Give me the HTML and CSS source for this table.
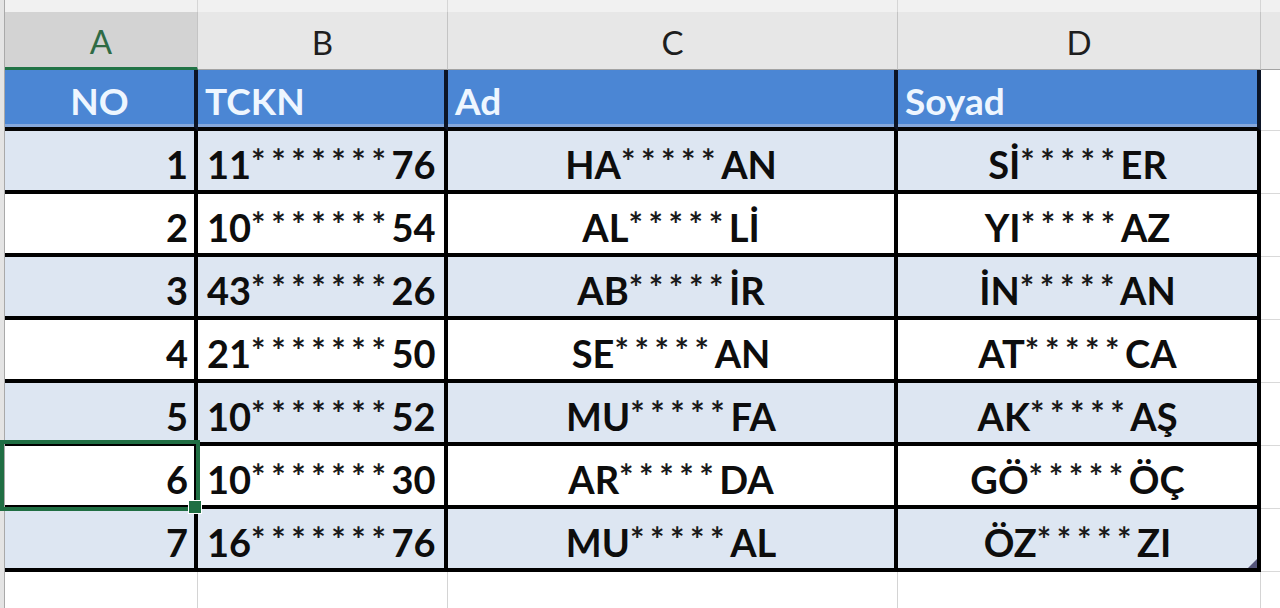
FILE: index.html
```html
<!DOCTYPE html>
<html lang="tr">
<head>
<meta charset="utf-8">
<title>Excel</title>
<link rel="stylesheet" href="styles.css">
</head>
<body>
<div class="sheet">
  <div class="row top-strip">
    <div class="stub"></div><div class="tc"></div><div class="tc"></div><div class="tc"></div><div class="tc"></div><div class="tc last"></div>
  </div>
  <div class="row col-head">
    <div class="stub"></div>
    <div class="ch sel">A</div>
    <div class="ch">B</div>
    <div class="ch">C</div>
    <div class="ch">D</div>
    <div class="ch last"></div>
  </div>
  <div class="row head-row">
    <div class="stub"></div>
    <div class="hc center">NO</div>
    <div class="hc left">TCKN</div>
    <div class="hc left">Ad</div>
    <div class="hc left">Soyad</div>
    <div class="ec"></div>
  </div>

  <div class="row data odd">
    <div class="stub"></div>
    <div class="dc num">1</div>
    <div class="dc left">11<span class="stars">*******</span>76</div>
    <div class="dc center">HA<span class="stars">*****</span>AN</div>
    <div class="dc center">Sİ<span class="stars">*****</span>ER</div>
    <div class="ec"></div>
  </div>
  <div class="row data">
    <div class="stub"></div>
    <div class="dc num">2</div>
    <div class="dc left">10<span class="stars">*******</span>54</div>
    <div class="dc center">AL<span class="stars">*****</span>Lİ</div>
    <div class="dc center">YI<span class="stars">*****</span>AZ</div>
    <div class="ec"></div>
  </div>
  <div class="row data odd">
    <div class="stub"></div>
    <div class="dc num">3</div>
    <div class="dc left">43<span class="stars">*******</span>26</div>
    <div class="dc center">AB<span class="stars">*****</span>İR</div>
    <div class="dc center">İN<span class="stars">*****</span>AN</div>
    <div class="ec"></div>
  </div>
  <div class="row data">
    <div class="stub"></div>
    <div class="dc num">4</div>
    <div class="dc left">21<span class="stars">*******</span>50</div>
    <div class="dc center">SE<span class="stars">*****</span>AN</div>
    <div class="dc center">AT<span class="stars">*****</span>CA</div>
    <div class="ec"></div>
  </div>
  <div class="row data odd">
    <div class="stub"></div>
    <div class="dc num">5</div>
    <div class="dc left">10<span class="stars">*******</span>52</div>
    <div class="dc center">MU<span class="stars">*****</span>FA</div>
    <div class="dc center">AK<span class="stars">*****</span>AŞ</div>
    <div class="ec"></div>
  </div>
  <div class="row data">
    <div class="stub"></div>
    <div class="dc num">6</div>
    <div class="dc left">10<span class="stars">*******</span>30</div>
    <div class="dc center">AR<span class="stars">*****</span>DA</div>
    <div class="dc center">GÖ<span class="stars">*****</span>ÖÇ</div>
    <div class="ec"></div>
  </div>
  <div class="row data odd">
    <div class="stub"></div>
    <div class="dc num">7</div>
    <div class="dc left">16<span class="stars">*******</span>76</div>
    <div class="dc center">MU<span class="stars">*****</span>AL</div>
    <div class="dc center">ÖZ<span class="stars">*****</span>ZI</div>
    <div class="ec"></div>
  </div>

  <div class="row empty">
    <div class="stub"></div><div class="gc"></div><div class="gc"></div><div class="gc"></div><div class="gc"></div><div class="gc last"></div>
  </div>

  <div class="selection"></div>
  <div class="fill-handle"></div>
  <div class="resize-handle"></div>
</div>
</body>
</html>
```

FILE: styles.css
```css
html, body {
  margin: 0;
  padding: 0;
  background: #ffffff;
}
body {
  width: 1280px;
  height: 608px;
  overflow: hidden;
  font-family: Lato, "Open Sans", "Liberation Sans", sans-serif;
}
.sheet {
  position: relative;
  width: 1280px;
  height: 608px;
  overflow: hidden;
}
.row {
  display: grid;
  grid-template-columns: 5px 193px 250px 450px 363px 1fr;
}
.stub {
  background: #e4e4e4;
  border-right: 1px solid #a9a9a9;
}

/* top strip */
.top-strip {
  height: 12px;
  background: #f1f1f1;
}
.tc {
  border-right: 1px solid #d6d6d6;
}
.tc.last { border-right: none; }

/* column letters */
.col-head {
  height: 58px;
}
.ch {
  background: #e7e7e7;
  border-right: 1px solid #c4c4c4;
  border-bottom: 1px solid #a3a3a3;
  display: flex;
  align-items: center;
  justify-content: center;
  font-size: 33px;
  color: #1e1e1e;
  padding-top: 2px;
  box-sizing: border-box;
}
.ch.sel {
  background: #d3d3d3;
  border-bottom: 3px solid #217346;
  color: #2f6b45;
}
.ch.last { border-right: none; }

/* table header */
.head-row {
  height: 61px;
}
.hc {
  background: #4b86d4;
  border-right: 4px solid #0c1526;
  border-bottom: 4px solid #050505;
  box-shadow: inset 0 -3px 0 #86a8dc;
  color: #eef6ff;
  font-weight: 700;
  font-size: 37px;
  display: flex;
  align-items: center;
  padding-top: 4px;
  box-sizing: border-box;
}
.hc.center { justify-content: center; }
.hc.left { justify-content: flex-start; padding-left: 7px; }

/* data */
.data {
  height: 63px;
}
.dc {
  background: #ffffff;
  border-right: 4px solid #000000;
  border-bottom: 4px solid #000000;
  color: #0d0d0d;
  font-weight: 700;
  font-size: 38px;
  display: flex;
  align-items: center;
  padding-top: 6px;
  box-sizing: border-box;
  white-space: nowrap;
}
.odd .dc { background: #dde6f2; }
.dc.num { justify-content: flex-end; padding-right: 6px; }
.dc.left { justify-content: flex-start; padding-left: 9px; }
.dc.center { justify-content: center; }
.stars {
  font-size: 34px;
  letter-spacing: 5.6px;
  position: relative;
  top: -3px;
  color: #1a1a1a;
}
.ec {
  background: #ffffff;
  border-bottom: 1px solid #d9d9d9;
}

/* empty row */
.empty { height: 40px; }
.gc {
  border-right: 1px solid #d4d4d4;
}
.gc.last { border-right: none; }

/* overlays */
.selection {
  position: absolute;
  left: 0;
  top: 440px;
  width: 200px;
  height: 71px;
  border: 4px solid #1f6e43;
  box-sizing: border-box;
}
.fill-handle {
  position: absolute;
  left: 188px;
  top: 500px;
  width: 14px;
  height: 14px;
  background: #1f6e43;
  border: 1px solid #ffffff;
  box-sizing: border-box;
}
.resize-handle {
  position: absolute;
  left: 1248px;
  top: 559px;
  width: 0;
  height: 0;
  border-left: 9px solid transparent;
  border-bottom: 9px solid #55557a;
}
```
